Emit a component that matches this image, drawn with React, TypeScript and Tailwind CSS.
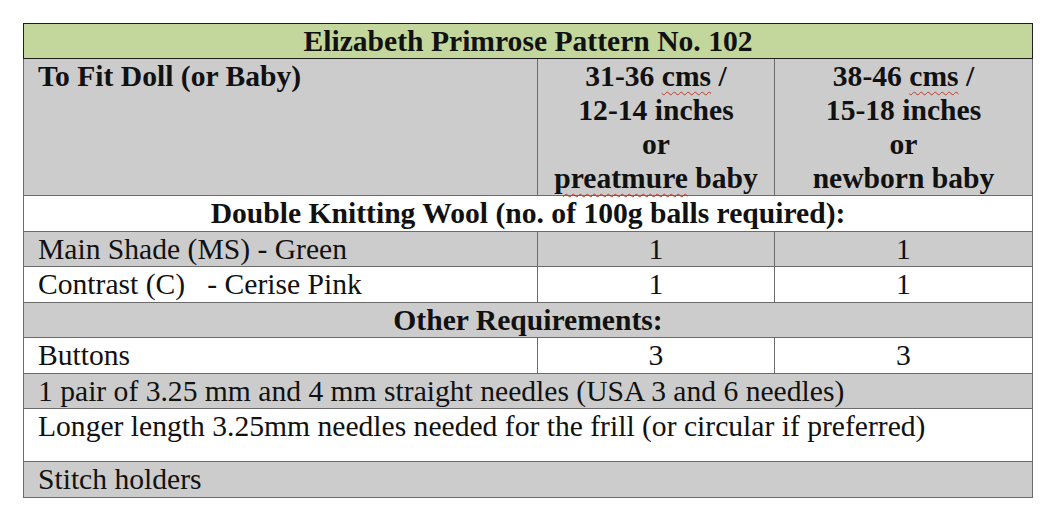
type Row = { label: string; a?: string; b?: string; shade?: boolean };

const wool: Row[] = [
  { label: "Main Shade (MS) - Green", a: "1", b: "1", shade: true },
  { label: "Contrast (C)\u00a0\u00a0 - Cerise Pink", a: "1", b: "1" },
];

function Squiggle({ children }: { children: React.ReactNode }) {
  return (
    <span className="underline decoration-wavy decoration-[#c0392b] decoration-1 underline-offset-[5px]">
      {children}
    </span>
  );
}

function ItemRow({ row }: { row: Row }) {
  const bg = row.shade ? "bg-[#cccccc]" : "bg-white";
  return (
    <tr className={bg}>
      <td className="border border-[#6b6b6b] h-[35.5px] px-[14px] align-top">{row.label}</td>
      <td className="border border-[#6b6b6b] text-center align-top">{row.a}</td>
      <td className="border border-[#6b6b6b] text-center align-top">{row.b}</td>
    </tr>
  );
}

function SectionRow({ title, shade }: { title: string; shade?: boolean }) {
  return (
    <tr className={shade ? "bg-[#cccccc]" : "bg-white"}>
      <td colSpan={3} className="border border-[#6b6b6b] h-[35.5px] text-center font-bold align-top">
        {title}
      </td>
    </tr>
  );
}

function WideRow({ text, shade, tall }: { text: string; shade?: boolean; tall?: boolean }) {
  return (
    <tr className={shade ? "bg-[#cccccc]" : "bg-white"}>
      <td
        colSpan={3}
        className={`border border-[#6b6b6b] px-[14px] align-top ${tall ? "h-[53px]" : "h-[35.5px]"}`}
      >
        {text}
      </td>
    </tr>
  );
}

export default function App() {
  return (
    <div className="w-[1057px] h-[527px] bg-white pt-[23px] pl-[23px] text-[#111] font-['Liberation_Serif','Times_New_Roman',serif]">
      <table className="table-fixed border-collapse w-[1009px] text-[29.6px] leading-[34px] font-['Liberation_Serif','Times_New_Roman',serif]">
        <colgroup>
          <col className="w-[514px]" />
          <col className="w-[237px]" />
          <col className="w-[258px]" />
        </colgroup>
        <tbody>
          <tr className="bg-[#c3d69b]">
            <td colSpan={3} className="border border-[#1f1f1f] h-[35px] text-center font-bold align-top">
              Elizabeth Primrose Pattern No. 102
            </td>
          </tr>
          <tr className="bg-[#cccccc] font-bold">
            <td className="border border-[#6b6b6b] h-[137px] px-[14px] align-top">To Fit Doll (or Baby)</td>
            <td className="border border-[#6b6b6b] text-center align-top">
              <div>
                31-36 <Squiggle>cms</Squiggle> /
              </div>
              <div>12-14 inches</div>
              <div>or</div>
              <div>
                <Squiggle>preatmure</Squiggle> baby
              </div>
            </td>
            <td className="border border-[#6b6b6b] text-center align-top">
              <div>
                38-46 <Squiggle>cms</Squiggle> /
              </div>
              <div>15-18 inches</div>
              <div>or</div>
              <div>newborn baby</div>
            </td>
          </tr>
          <SectionRow title="Double Knitting Wool (no. of 100g balls required):" />
          {wool.map((r) => (
            <ItemRow key={r.label} row={r} />
          ))}
          <SectionRow title="Other Requirements:" shade />
          <ItemRow row={{ label: "Buttons", a: "3", b: "3" }} />
          <WideRow text="1 pair of 3.25 mm and 4 mm straight needles (USA 3 and 6 needles)" shade />
          <WideRow text="Longer length 3.25mm needles needed for the frill (or circular if preferred)" tall />
          <WideRow text="Stitch holders" shade />
        </tbody>
      </table>
    </div>
  );
}
